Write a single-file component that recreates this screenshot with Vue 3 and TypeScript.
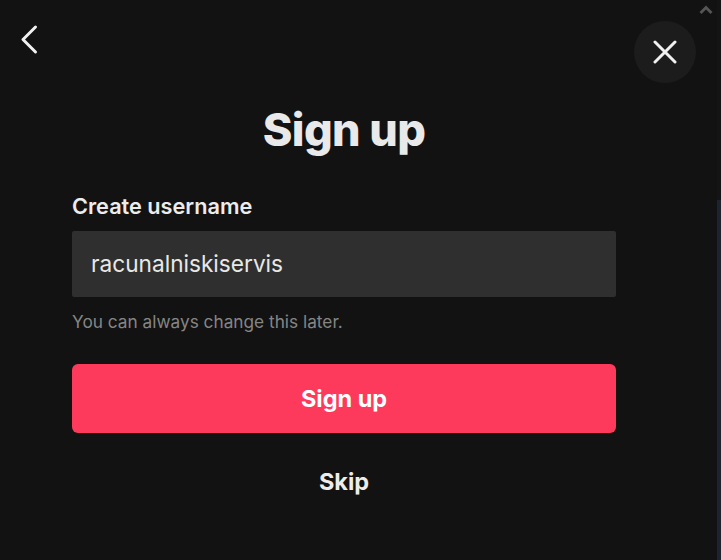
<script setup lang="ts">
const title = 'Sign up'
</script>

<template>
  <div class="page">
    <main class="modal">
      <button class="back" aria-label="Back">
        <svg width="20" height="32" viewBox="0 0 20 32"><path d="M15.5 3 L3 15.5 L15.5 28" fill="none" stroke="#f1f1f1" stroke-width="3" stroke-linecap="round" stroke-linejoin="round" /></svg>
      </button>
      <button class="close" aria-label="Close">
        <svg width="24" height="24" viewBox="0 0 24 24"><path d="M2 2 L22 22 M22 2 L2 22" fill="none" stroke="#f1f1f1" stroke-width="3" stroke-linecap="round" /></svg>
      </button>
      <h1 class="title">{{ title }}</h1>
      <label class="label">Create username</label>
      <div class="field">racunalniskiservis</div>
      <p class="hint">You can always change this later.</p>
      <button class="submit">Sign up</button>
      <button class="skip">Skip</button>
    </main>
    <aside class="scroll">
      <svg class="arrow" width="14" height="9" viewBox="0 0 14 9"><path d="M1.5 8 L7 2.5 L12.5 8" fill="none" stroke="#555555" stroke-width="2.8" /></svg>
    </aside>
    <div class="edge"></div>
  </div>
</template>

<style>
html, body { margin: 0; background: #121212; }
</style>

<style scoped>
.page {
  display: flex;
  width: 721px;
  height: 560px;
  overflow: hidden;
  background: #121212;
  font-family: Inter, "Liberation Sans", sans-serif;
}
.modal {
  position: relative;
  box-sizing: border-box;
  flex: 0 0 688px;
  display: flex;
  flex-direction: column;
  padding: 102px 72px 0;
}
.back, .close {
  position: absolute;
  border: 0;
  padding: 0;
  background: none;
  display: flex;
  align-items: center;
  justify-content: center;
}
.back { left: 20px; top: 24px; width: 20px; height: 32px; }
.close { left: 634px; top: 21px; width: 62px; height: 62px; border-radius: 50%; background: #1c1c1c; }
.title {
  margin: 0;
  text-align: center;
  font-size: 45px;
  line-height: 56px;
  font-weight: 800;
  letter-spacing: -0.6px;
  color: #e9e9e9;
}
.label {
  margin-top: 32px;
  font-size: 21.7px;
  line-height: 32px;
  font-weight: 600;
  color: #ececec;
}
.field {
  box-sizing: border-box;
  height: 66px;
  margin-top: 9px;
  padding: 0 19px 2px;
  display: flex;
  align-items: center;
  background: #2f2f2f;
  border-radius: 2px;
  font-size: 22.65px;
  color: #e8e8e8;
}
.hint {
  margin: 13px 0 0;
  font-size: 17.25px;
  line-height: 24px;
  color: #858585;
}
.submit {
  height: 69px;
  margin-top: 30px;
  border: 0;
  border-radius: 6px;
  background: #fe3a5c;
  color: #fff;
  font: 700 23.5px Inter, "Liberation Sans", sans-serif;
}
.skip {
  margin-top: 32px;
  height: 32px;
  border: 0;
  padding: 0;
  background: none;
  color: #ececec;
  font: 700 23.5px Inter, "Liberation Sans", sans-serif;
}
.scroll {
  flex: 0 0 29px;
  display: flex;
  justify-content: center;
  align-items: flex-start;
  padding: 5px 0 0 6px;
  box-sizing: border-box;
  background: #121212;
}
.edge {
  flex: 0 0 4px;
  background: linear-gradient(#141414 0 200px, #1d2430 200px);
}
</style>
